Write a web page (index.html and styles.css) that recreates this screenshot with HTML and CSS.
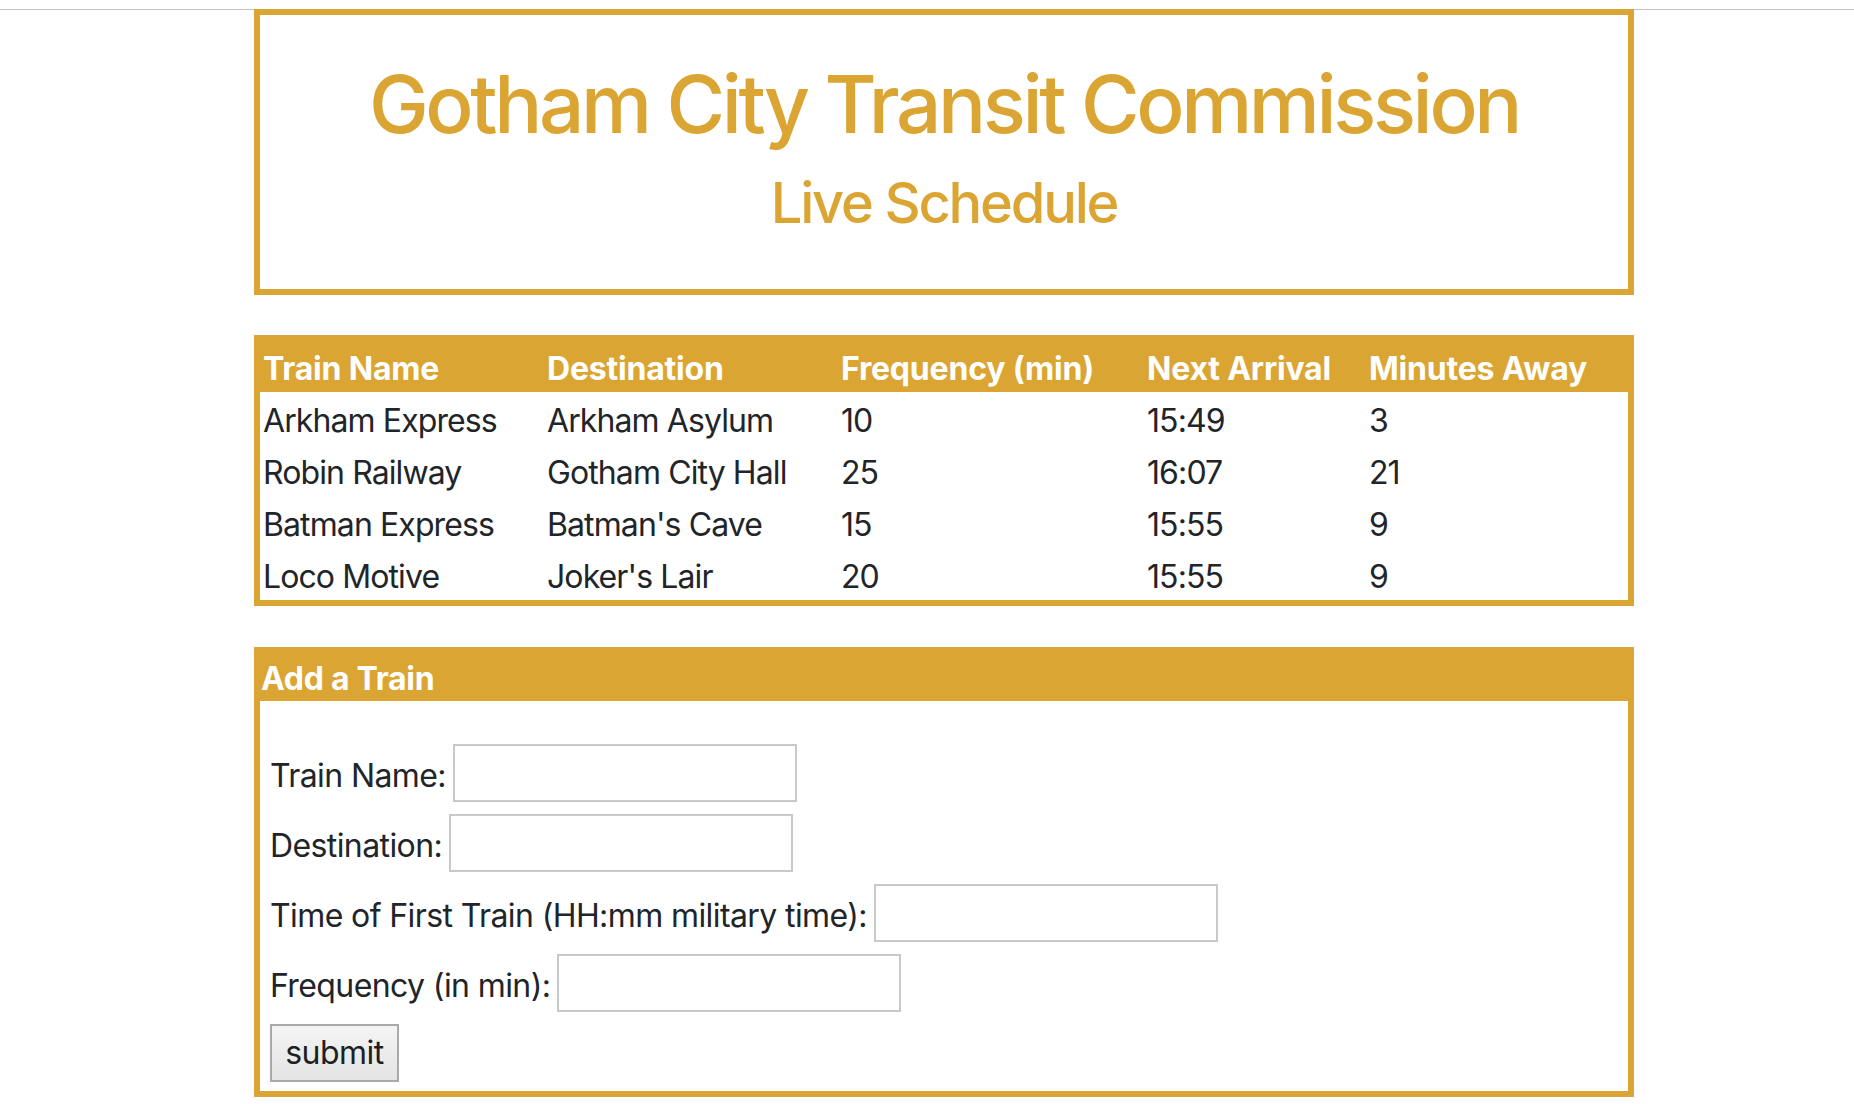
FILE: index.html
```html
<!DOCTYPE html>
<html lang="en">
<head>
<meta charset="utf-8">
<title>Gotham City Transit Commission</title>
<link rel="stylesheet" href="styles.css">
</head>
<body>
<div class="topline"></div>
<div class="container">
  <header class="masthead">
    <h1 class="title">Gotham City Transit Commission</h1>
    <h3 class="subtitle">Live Schedule</h3>
  </header>

  <table class="schedule">
    <colgroup>
      <col class="c-name">
      <col class="c-dest">
      <col class="c-freq">
      <col class="c-next">
      <col class="c-away">
    </colgroup>
    <thead>
      <tr><th>Train Name</th><th>Destination</th><th>Frequency (min)</th><th>Next Arrival</th><th>Minutes Away</th></tr>
    </thead>
    <tbody>
      <tr><td>Arkham Express</td><td>Arkham Asylum</td><td>10</td><td>15:49</td><td>3</td></tr>
      <tr><td>Robin Railway</td><td>Gotham City Hall</td><td>25</td><td>16:07</td><td>21</td></tr>
      <tr><td>Batman Express</td><td>Batman's Cave</td><td>15</td><td>15:55</td><td>9</td></tr>
      <tr><td>Loco Motive</td><td>Joker's Lair</td><td>20</td><td>15:55</td><td>9</td></tr>
    </tbody>
  </table>

  <section class="panel">
    <div class="panel-head">Add a Train</div>
    <form class="panel-body">
      <div class="field"><label class="label" for="name">Train Name:</label><input class="input" id="name" type="text"></div>
      <div class="field"><label class="label" for="dest">Destination:</label><input class="input" id="dest" type="text"></div>
      <div class="field"><label class="label" for="first">Time of First Train (HH:mm military time):</label><input class="input" id="first" type="text"></div>
      <div class="field"><label class="label" for="freq">Frequency (in min):</label><input class="input" id="freq" type="text"></div>
      <div class="field"><button class="submit" type="button">submit</button></div>
    </form>
  </section>
</div>
</body>
</html>
```
FILE: styles.css
```css
* { box-sizing: border-box; }
html, body { margin: 0; padding: 0; background: #fff; }
body {
  font-family: Inter, "Noto Sans", "Liberation Sans", sans-serif;
  color: #212529;
  font-size: 32px;
  line-height: 48px;
}
.topline {
  height: 10px;
  border-bottom: 1px solid #c3c3c3;
}
.container {
  margin-left: 254px;
  width: 1380px;
}
.masthead {
  border: 6px solid #dba534;
  text-align: center;
  padding: 41px 0 52px;
  margin-top: -1px;
}
.title {
  margin: 0 0 18px;
  font-size: 80px;
  line-height: 96px;
  font-weight: 500;
  color: #dba534;
  letter-spacing: -3.4px;
}
.subtitle {
  margin: 0;
  font-size: 56px;
  line-height: 67px;
  font-weight: 500;
  color: #dba534;
  letter-spacing: -2.2px;
}
.schedule {
  margin-top: 40px;
  width: 1380px;
  border: 6px solid #dba534;
  border-collapse: separate;
  border-spacing: 0;
  table-layout: fixed;
}
.c-name { width: 284px; }
.c-dest { width: 294px; }
.c-freq { width: 306px; }
.c-next { width: 222px; }
.c-away { width: 262px; }
.schedule th,
.schedule td {
  text-align: left;
  white-space: nowrap;
  vertical-align: top;
  letter-spacing: -0.9px;
}
.schedule th {
  height: 51px;
  padding: 4px 0 0 3px;
  line-height: 47px;
  background: #dba534;
  color: #fff;
  font-weight: 700;
  letter-spacing: -0.2px;
}
.schedule td {
  height: 52px;
  padding: 6px 0 0 3px;
  line-height: 46px;
}
.panel {
  margin-top: 41px;
  border: 6px solid #dba534;
}
.panel-head {
  height: 48px;
  padding: 2px 0 0 1px;
  background: #dba534;
  color: #fff;
  font-weight: 700;
  line-height: 48px;
  letter-spacing: -0.3px;
}
.panel-body {
  display: flex;
  flex-direction: column;
  gap: 12px;
  padding: 43px 10px 9px;
  margin: 0;
}
.field {
  display: flex;
  align-items: center;
  height: 58px;
}
.label {
  letter-spacing: -0.6px;
  margin-right: 7px;
  padding: 5px 0 0 0;
}
.input {
  width: 344px;
  height: 58px;
  border: 2px solid #c9c9c9;
  background: #fff;
  margin: 0;
  font: inherit;
}
.submit {
  width: 129px;
  height: 58px;
  margin: 0;
  font-family: Inter, "Noto Sans", "Liberation Sans", sans-serif;
  font-size: 32px;
  color: #1f1f1f;
  letter-spacing: -0.5px;
  border: 2px solid #a9a9a9;
  background: linear-gradient(#f4f4f4, #e4e4e4);
  padding: 0 0 2px;
}
```
